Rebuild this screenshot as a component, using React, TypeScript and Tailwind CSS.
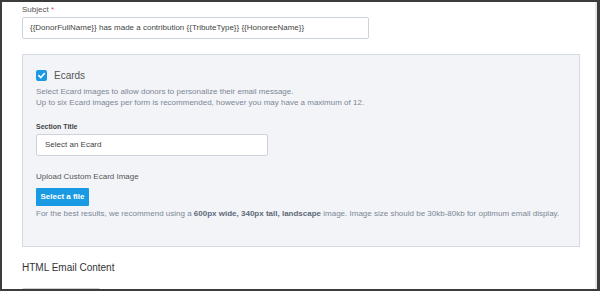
import React from "react";

export default function App() {
  const font = { fontFamily: '"Liberation Sans", Arial, sans-serif' };
  return (
    <div
      className="w-[600px] h-[291px] overflow-hidden flex bg-white border-t-2 border-l-2 border-b-2 border-[#3c3c3c]"
      style={font}
    >
      <div className="flex-1 flex flex-col pl-[20px] pt-[2px] min-w-0 overflow-hidden">
        <div className="shrink-0 h-[12px] leading-[12px] text-[8px] text-[#555]">
          Subject <span className="text-[#e04b4b]">*</span>
        </div>
        <div className="shrink-0 mt-[1px] w-[347px] h-[22px] border border-[#cdd3da] rounded-[2px] flex items-center pl-[7px] text-[8px] text-[#444]">
          {"{{DonorFullName}} has made a contribution {{TributeType}} {{HonoreeName}}"}
        </div>
        <div className="shrink-0 mt-[15px] w-[558px] h-[193px] bg-[#f2f4f8] border border-[#d5dce6] flex flex-col pl-[13px] pt-[13px]">
          <div className="shrink-0 h-[14px] flex items-center gap-[7px]">
            <div className="w-[11px] h-[11px] rounded-[2px] bg-[#1b9ae4] flex items-center justify-center">
              <svg width="9" height="9" viewBox="0 0 10 10">
                <path d="M2 5.2 L4.2 7.3 L8.2 2.8" fill="none" stroke="white" strokeWidth="1.8" strokeLinecap="round" strokeLinejoin="round" />
              </svg>
            </div>
            <span className="text-[10px] text-[#555]">Ecards</span>
          </div>
          <div className="shrink-0 mt-[4px] text-[8px] leading-[11px] text-[#7d8795]">
            <div>Select Ecard images to allow donors to personalize their email message.</div>
            <div>Up to six Ecard images per form is recommended, however you may have a maximum of 12.</div>
          </div>
          <div className="shrink-0 mt-[14px] h-[10px] leading-[10px] text-[7px] font-bold text-[#444]">Section Title</div>
          <div className="shrink-0 mt-[2px] w-[232px] h-[22px] bg-white border border-[#cdd3da] rounded-[2px] flex items-center pl-[8px] text-[8px] text-[#444]">
            Select an Ecard
          </div>
          <div className="shrink-0 mt-[16px] h-[10px] leading-[10px] text-[8px] text-[#555]">Upload Custom Ecard Image</div>
          <div className="shrink-0 mt-[6px] w-[53px] h-[18px] bg-[#1b9ae4] rounded-[1px] flex items-center justify-center text-[8px] font-bold text-white">
            Select a file
          </div>
          <div className="shrink-0 mt-[3px] h-[10px] leading-[10px] text-[8px] text-[#7d8795] whitespace-nowrap">
            For the best results, we recommend using a <b className="text-[#5f6a7a]">600px wide, 340px tall, landscape</b> image. Image size should be 30kb-80kb for optimum email display.
          </div>
        </div>
        <div className="shrink-0 mt-[14px] h-[14px] leading-[14px] text-[10px] text-[#333]">HTML Email Content</div>
        <div className="shrink-0 mt-[13px] w-[78px] h-[10px] border-t border-x border-[#cfcfcf] rounded-t-[2px]" />
      </div>
      <div className="w-[2px] shrink-0 bg-[#e6e6e6]" />
      <div className="w-[3px] shrink-0 bg-[#3c3c3c]" />
    </div>
  );
}
